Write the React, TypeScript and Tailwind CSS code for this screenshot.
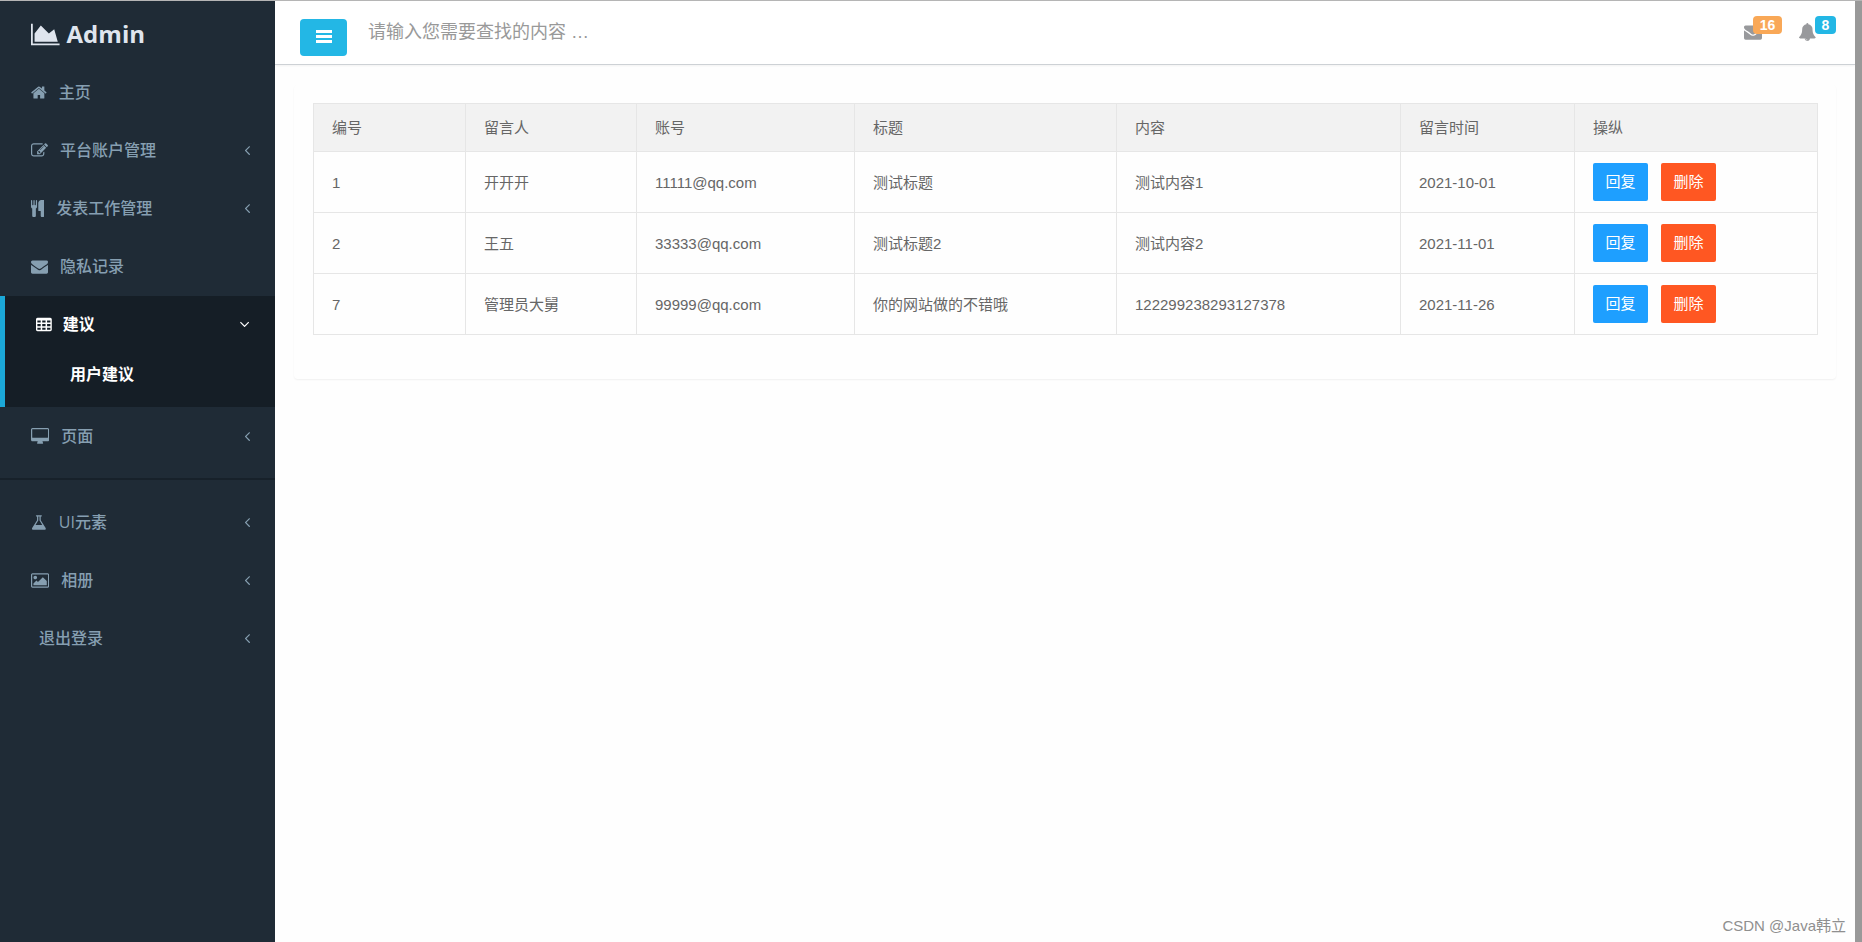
import React from "react";

type Glyph = { box: string; d: string };

const ICONS = {
  chart: {
    box: "0 0 2048 1792",
    d: "M2048 1536v128h-2048v-1536h128v1408h1920zm-384-1024l256 896h-1664v-576l448-576 576 576z",
  },
  home: {
    box: "64 0 1664 1792",
    d: "M1472 992v480q0 26-19 45t-45 19h-384v-384h-256v384h-384q-26 0-45-19t-19-45v-480q0-1 .5-3t.5-3l575-474 575 474q1 2 1 6zm223-69l-62 74q-8 9-21 11h-3q-13 0-21-7l-692-577-692 577q-12 8-24 7-13-2-21-11l-62-74q-8-10-7-23.5t11-21.5l719-599q32-26 76-26t76 26l244 204v-195q0-14 9-23t23-9h192q14 0 23 9t9 23v408l219 182q10 8 11 21.5t-7 23.5z",
  },
  edit: {
    box: "0 0 1792 1792",
    d: "M888 1184l116-116-152-152-116 116v56h96v96h56zm440-720q-16-16-33 1l-350 350q-17 17-1 33t33-1l350-350q17-17 1-33zm80 594v190q0 119-84.5 203.5t-203.5 84.5h-832q-119 0-203.5-84.5t-84.5-203.5v-832q0-119 84.5-203.5t203.5-84.5h832q63 0 117 25 15 7 18 23 3 17-9 29l-49 49q-14 14-32 8-23-6-45-6h-832q-66 0-113 47t-47 113v832q0 66 47 113t113 47h832q66 0 113-47t47-113v-126q0-13 9-22l64-64q15-15 35-7t20 29zm-96-738l288 288-672 672h-288v-288zm444 132l-92 92-288-288 92-92q28-28 68-28t68 28l152 152q28 28 28 68t-28 68z",
  },
  cutlery: {
    box: "192 0 1408 1792",
    d: "M832 64v640q0 61-35.5 111t-92.5 70v779q0 52-38 90t-90 38h-128q-52 0-90-38t-38-90v-779q-57-20-92.5-70t-35.5-111v-640q0-26 19-45t45-19 45 19 19 45v416q0 26 19 45t45 19 45-19 19-45v-416q0-26 19-45t45-19 45 19 19 45v416q0 26 19 45t45 19 45-19 19-45v-416q0-26 19-45t45-19 45 19 19 45zm768 0v1600q0 52-38 90t-90 38h-128q-52 0-90-38t-38-90v-512h-224q-13 0-22.5-9.5t-9.5-22.5v-800q0-132 94-226t226-94h256q26 0 45 19t19 45z",
  },
  envelope: {
    box: "0 0 1792 1792",
    d: "M1792 710v794q0 66-47 113t-113 47h-1472q-66 0-113-47t-47-113v-794q44 49 101 87 362 246 497 345 57 42 92.5 65.5t94.5 48 110 24.5h2q51 0 110-24.5t94.5-48 92.5-65.5q170-123 498-345 57-39 100-87zm0-294q0 79-49 151t-122 123q-376 261-468 325-10 7-42.5 31t-54 38.5-52 32.5-57.5 27-50 9h-2q-23 0-50-9t-57.5-27-52-32.5-54-38.5-42.5-31q-91-64-262-182.5t-205-142.5q-62-42-117-115.5t-55-136.5q0-78 41.5-130t118.5-52h1472q65 0 112.5 47t47.5 113z",
  },
  table: {
    box: "64 0 1664 1792",
    d: "M224 192h1344q66 0 113 47t47 113v1088q0 66-47 113t-113 47h-1344q-66 0-113-47t-47-113v-1088q0-66 47-113t113-47zM208 464v224h352v-224zM720 464v224h352v-224zM1232 464v224h352v-224zM208 848v224h352v-224zM720 848v224h352v-224zM1232 848v224h352v-224zM208 1232v224h352v-224zM720 1232v224h352v-224zM1232 1232v224h352v-224z",
  },
  desktop: {
    box: "0 0 1920 1792",
    d: "M1792 992v-832q0-13-9.5-22.5t-22.5-9.5h-1600q-13 0-22.5 9.5t-9.5 22.5v832q0 13 9.5 22.5t22.5 9.5h1600q13 0 22.5-9.5t9.5-22.5zm128-832v1088q0 66-47 113t-113 47h-544q0 37 16 77.5t32 71 16 43.5q0 26-19 45t-45 19h-512q-26 0-45-19t-19-45q0-14 16-44t32-70 16-78h-544q-66 0-113-47t-47-113v-1088q0-66 47-113t113-47h1600q66 0 113 47t47 113z",
  },
  flask: {
    box: "64 0 1664 1792",
    d: "M1591 1448q56 89 21.5 152.5t-140.5 63.5h-1152q-106 0-140.5-63.5t21.5-152.5l503-793v-399h-64q-26 0-45-19t-19-45 19-45 45-19h512q26 0 45 19t19 45-19 45-45 19h-64v399zm-779-725l-272 429h712l-272-429-20-31v-436h-128v436z",
  },
  picture: {
    box: "-64 0 1920 1792",
    d: "M576 576q0 80-56 136t-136 56-136-56-56-136 56-136 136-56 136 56 56 136zm1024 384v448h-1408v-192l320-320 160 160 512-512zm96-704h-1600q-13 0-22.5 9.5t-9.5 22.5v1216q0 13 9.5 22.5t22.5 9.5h1600q13 0 22.5-9.5t9.5-22.5v-1216q0-13-9.5-22.5t-22.5-9.5zm160 32v1216q0 66-47 113t-113 47h-1600q-66 0-113-47t-47-113v-1216q0-66 47-113t113-47h1600q66 0 113 47t47 113z",
  },
  bars: {
    box: "0 0 16 13",
    d: "M0 0h16v3h-16zM0 5h16v3h-16zM0 10h16v3h-16z",
  },
  left: {
    box: "640 0 640 1792",
    d: "M1203 544q0 13-10 23l-393 393 393 393q10 10 10 23t-10 23l-50 50q-10 10-23 10t-23-10l-466-466q-10-10-10-23t10-23l466-466q10-10 23-10t23 10l50 50q10 10 10 23z",
  },
  down: {
    box: "384 0 1152 1792",
    d: "M1395 736q0 13-10 23l-466 466q-10 10-23 10t-23-10l-466-466q-10-10-10-23t10-23l50-50q10-10 23-10t23 10l393 393 393-393q10-10 23-10t23 10l50 50q10 10 10 23z",
  },
  bell: {
    box: "64 0 1664 1792",
    d: "M912 1696q0-16-16-16-59 0-101.5-42.5t-42.5-101.5q0-16-16-16t-16 16q0 73 51.5 124.5t124.5 51.5q16 0 16-16zm816-288q0 52-38 90t-90 38h-448q0 106-75 181t-181 75-181-75-75-181h-448q-52 0-90-38t-38-90q50-42 91-88t85-119.5 74.5-158.5 50-206 19.5-260q0-152 117-282.5t307-158.5q-8-19-8-39 0-40 28-68t68-28 68 28 28 68q0 20-8 39 190 28 307 158.5t117 282.5q0 139 19.5 260t50 206 74.5 158.5 85 119.5 91 88z",
  },
} satisfies Record<string, Glyph>;

type IconName = keyof typeof ICONS;

function Icon({ name, className }: { name: IconName; className: string }) {
  const glyph = ICONS[name];
  return (
    <svg viewBox={glyph.box} className={`shrink-0 ${className}`} fill="currentColor" fillRule="evenodd" aria-hidden="true">
      <path d={glyph.d} />
    </svg>
  );
}

type Item = { label: string; icon?: IconName; expandable?: boolean };

const MAIN_ITEMS: Item[] = [
  { label: "主页", icon: "home" },
  { label: "平台账户管理", icon: "edit", expandable: true },
  { label: "发表工作管理", icon: "cutlery", expandable: true },
  { label: "隐私记录", icon: "envelope" },
];

const EXTRA_ITEMS: Item[] = [
  { label: "UI元素", icon: "flask", expandable: true },
  { label: "相册", icon: "picture", expandable: true },
  { label: "退出登录", expandable: true },
];

function NavItem({ label, icon, expandable }: Item) {
  return (
    <li>
      <a href="#" className="flex h-[58px] items-center pr-6 pl-[31px] text-[#869fb1]">
        {icon && <Icon name={icon} className="h-[17px] w-auto" />}
        <span className={icon ? "ml-3" : "ml-2"}>{label}</span>
        {expandable && <Icon name="left" className="ml-auto h-4 w-auto" />}
      </a>
    </li>
  );
}

function Sidebar() {
  return (
    <nav className="w-[275px] shrink-0 bg-[#1f2b36] font-['Open_Sans','Noto_Sans_CJK_SC',sans-serif] text-base leading-6 font-medium">
      <a href="#" className="flex h-[62px] items-center pt-1 pl-[31px] text-[#dfe5ee]">
        <Icon name="chart" className="h-[25px] w-auto" />
        <span className="ml-[7px] text-2xl leading-8 font-bold">Admin</span>
      </a>
      <ul>
        {MAIN_ITEMS.map((item) => (
          <NavItem key={item.label} {...item} />
        ))}
        <li className="mt-px border-l-[5px] border-[#1ba8d8] bg-[#151e26] pb-[9px] font-bold text-white">
          <a href="#" className="flex h-[58px] items-center pr-[25px] pb-0.5 pl-[31px]">
            <Icon name="table" className="h-[17px] w-auto" />
            <span className="ml-[11px]">建议</span>
            <Icon name="down" className="ml-auto h-4 w-auto" />
          </a>
          <a href="#" className="flex h-11 items-center pb-1 pl-[65px]">
            用户建议
          </a>
        </li>
        <NavItem label="页面" icon="desktop" expandable />
      </ul>
      <hr className="mt-[13px] mb-[13px] border-t-2 border-[#17212a]" />
      <ul>
        {EXTRA_ITEMS.map((item) => (
          <NavItem key={item.label} {...item} />
        ))}
      </ul>
    </nav>
  );
}

function TopBar() {
  return (
    <header className="flex h-16 items-start border-b border-[#cdd1d5] bg-white pt-[18px] pr-[19px] pl-[25px] shadow-xs">
      <button type="button" aria-label="菜单" className="flex h-[37px] w-[47px] items-center justify-center rounded bg-[#23b7e5] pb-0.5 text-white">
        <Icon name="bars" className="h-[13px] w-4" />
      </button>
      <input
        type="search"
        aria-label="搜索"
        placeholder="请输入您需要查找的内容 …"
        className="ml-[21px] h-[26px] w-80 bg-transparent text-[18px] outline-none placeholder:text-[#999]"
      />
      <div className="ml-auto flex gap-[17px] text-[#98999c]">
        <a href="#" aria-label="邮件" className="relative flex w-[38px]">
          <Icon name="envelope" className="mt-1 h-[18px] w-auto" />
          <span className="absolute -top-[3px] right-0 flex h-[18px] w-[29px] items-center justify-center rounded bg-[#f9a857] text-sm font-bold text-white">16</span>
        </a>
        <a href="#" aria-label="通知" className="relative flex w-[37px]">
          <Icon name="bell" className="mt-1 h-[18px] w-auto" />
          <span className="absolute -top-[3px] right-0 flex h-[18px] w-[21px] items-center justify-center rounded bg-[#23b7e5] text-sm font-bold text-white">8</span>
        </a>
      </div>
    </header>
  );
}

const COLUMNS = [
  { title: "编号", width: "w-[152px]" },
  { title: "留言人", width: "w-[171px]" },
  { title: "账号", width: "w-[218px]" },
  { title: "标题", width: "w-[262px]" },
  { title: "内容", width: "w-[284px]" },
  { title: "留言时间", width: "w-[174px]" },
  { title: "操纵", width: "w-[243px]" },
];

const ROWS = [
  ["1", "开开开", "11111@qq.com", "测试标题", "测试内容1", "2021-10-01"],
  ["2", "王五", "33333@qq.com", "测试标题2", "测试内容2", "2021-11-01"],
  ["7", "管理员大舅", "99999@qq.com", "你的网站做的不错哦", "122299238293127378", "2021-11-26"],
];

function MessageTable() {
  return (
    <table className="w-full table-fixed border-collapse text-left text-[15px] leading-5 text-[#666]">
      <thead>
        <tr className="h-12 bg-[#f2f2f2]">
          {COLUMNS.map((column) => (
            <th key={column.title} className={`border border-[#e6e6e6] px-[18px] font-normal ${column.width}`}>
              {column.title}
            </th>
          ))}
        </tr>
      </thead>
      <tbody>
        {ROWS.map((row) => (
          <tr key={row[0]} className="h-[61px]">
            {row.map((cell, index) => (
              <td key={index} className="border border-[#e6e6e6] px-[18px] pt-0.5">
                {cell}
              </td>
            ))}
            <td className="border border-[#e6e6e6] px-[18px]">
              <div className="flex gap-[13px] text-white">
                <button type="button" className="h-[38px] w-[55px] rounded-xs bg-[#1e9fff]">
                  回复
                </button>
                <button type="button" className="h-[38px] w-[55px] rounded-xs bg-[#ff5722]">
                  删除
                </button>
              </div>
            </td>
          </tr>
        ))}
      </tbody>
    </table>
  );
}

export default function App() {
  return (
    <div className="flex min-h-screen border-t border-[#b5b5b5] bg-[#fefefe] font-['Liberation_Sans','Noto_Sans_CJK_SC',sans-serif]">
      <Sidebar />
      <div className="flex min-w-0 grow flex-col">
        <TopBar />
        <main className="px-[19px] pt-5">
          <section className="rounded bg-[#fefefe] px-[19px] pt-[18px] pb-11 shadow-[0_1px_2px_rgba(0,0,0,0.06)]">
            <MessageTable />
          </section>
        </main>
        <p className="mt-auto pr-[9px] pb-1 text-right text-[15px] leading-6 text-[#8f8f8f]">CSDN @Java韩立</p>
      </div>
      <div className="w-[7px] shrink-0 bg-[#999]" />
    </div>
  );
}
